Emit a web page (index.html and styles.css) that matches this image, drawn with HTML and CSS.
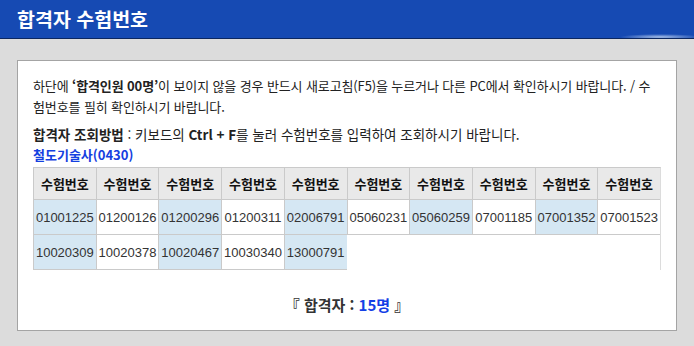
FILE: index.html
```html
<!DOCTYPE html>
<html lang="ko">
<head>
<meta charset="utf-8">
<title>합격자 수험번호</title>
<link rel="stylesheet" href="styles.css">
</head>
<body>
<header class="topbar">
  <h1 class="topbar-title">합격자 수험번호</h1>
</header>
<main class="panel">
  <p class="notice">하단에 <strong>‘합격인원 00명’</strong>이 보이지 않을 경우 반드시 새로고침(F5)을 누르거나 다른 PC에서 확인하시기 바랍니다. / 수험번호를 필히 확인하시기 바랍니다.</p>
  <p class="howto"><strong>합격자 조회방법</strong> : 키보드의 <strong>Ctrl + F</strong>를 눌러 수험번호를 입력하여 조회하시기 바랍니다.</p>
  <h2 class="category">철도기술사(0430)</h2>
  <div class="numbers">
    <div class="cell head">수험번호</div>
    <div class="cell head">수험번호</div>
    <div class="cell head">수험번호</div>
    <div class="cell head">수험번호</div>
    <div class="cell head">수험번호</div>
    <div class="cell head">수험번호</div>
    <div class="cell head">수험번호</div>
    <div class="cell head">수험번호</div>
    <div class="cell head">수험번호</div>
    <div class="cell head">수험번호</div>
    <div class="cell alt">01001225</div>
    <div class="cell">01200126</div>
    <div class="cell alt">01200296</div>
    <div class="cell">01200311</div>
    <div class="cell alt">02006791</div>
    <div class="cell">05060231</div>
    <div class="cell alt">05060259</div>
    <div class="cell">07001185</div>
    <div class="cell alt">07001352</div>
    <div class="cell">07001523</div>
    <div class="cell alt">10020309</div>
    <div class="cell">10020378</div>
    <div class="cell alt">10020467</div>
    <div class="cell">10030340</div>
    <div class="cell alt">13000791</div>
  </div>
  <p class="total">『 합격자 : <span class="total-count">15명</span> 』</p>
</main>
</body>
</html>
```
FILE: styles.css
```css
html, body {
  margin: 0;
  padding: 0;
}
body {
  background: #dcdcdc;
  font-family: "Noto Sans CJK KR", "Noto Sans", "Liberation Sans", sans-serif;
  color: #222;
  width: 694px;
  height: 346px;
  overflow: hidden;
}
.topbar {
  height: 38px;
  border-bottom: 1px solid #0c2760;
  background:
    radial-gradient(ellipse 40px 3px at 660px 37px, rgba(190, 210, 240, 0.85), rgba(190, 210, 240, 0) 100%),
    #164ab3;
  display: flex;
  align-items: center;
  padding-left: 17px;
}
.topbar-title {
  margin: 0;
  font-size: 19.5px;
  font-weight: bold;
  color: #fff;
  line-height: 1;
}
.panel {
  margin: 21px 17px 0;
  height: 271px;
  box-sizing: border-box;
  border: 1px solid #a4a4a4;
  background: #fff;
  padding: 14px 15px 0;
}
.notice {
  margin: 0;
  font-size: 13px;
  line-height: 21px;
  color: #222;
  letter-spacing: -0.12px;
}
.notice strong {
  font-weight: bold;
}
.howto {
  margin: 6px 0 0;
  font-size: 13.5px;
  line-height: 22px;
  color: #222;
}
.category {
  margin: 0;
  font-size: 13px;
  line-height: 19px;
  font-weight: bold;
  color: #1440e0;
}
.numbers {
  margin-top: 3px;
  display: grid;
  grid-template-columns: repeat(10, 1fr);
  border-top: 1px solid #cacaca;
  border-right: 1px solid #dcdcdc;
}
.cell {
  border-left: 1px solid #cacaca;
  border-bottom: 1px solid #cacaca;
  height: 34px;
  display: flex;
  align-items: center;
  justify-content: center;
  font-family: "Liberation Sans", Arial, sans-serif;
  font-size: 13px;
  color: #333;
  background: #fff;
}
.cell.head {
  height: 31px;
  background: #e9e9e9;
  font-family: "Noto Sans CJK KR", sans-serif;
  font-weight: bold;
  color: #111;
}
.cell.alt {
  background: #d5e7f3;
}
.total {
  margin: 23px 0 0;
  text-align: center;
  font-size: 15px;
  font-weight: bold;
  line-height: 24px;
  color: #333;
}
.total-count {
  color: #1440e6;
}
```
